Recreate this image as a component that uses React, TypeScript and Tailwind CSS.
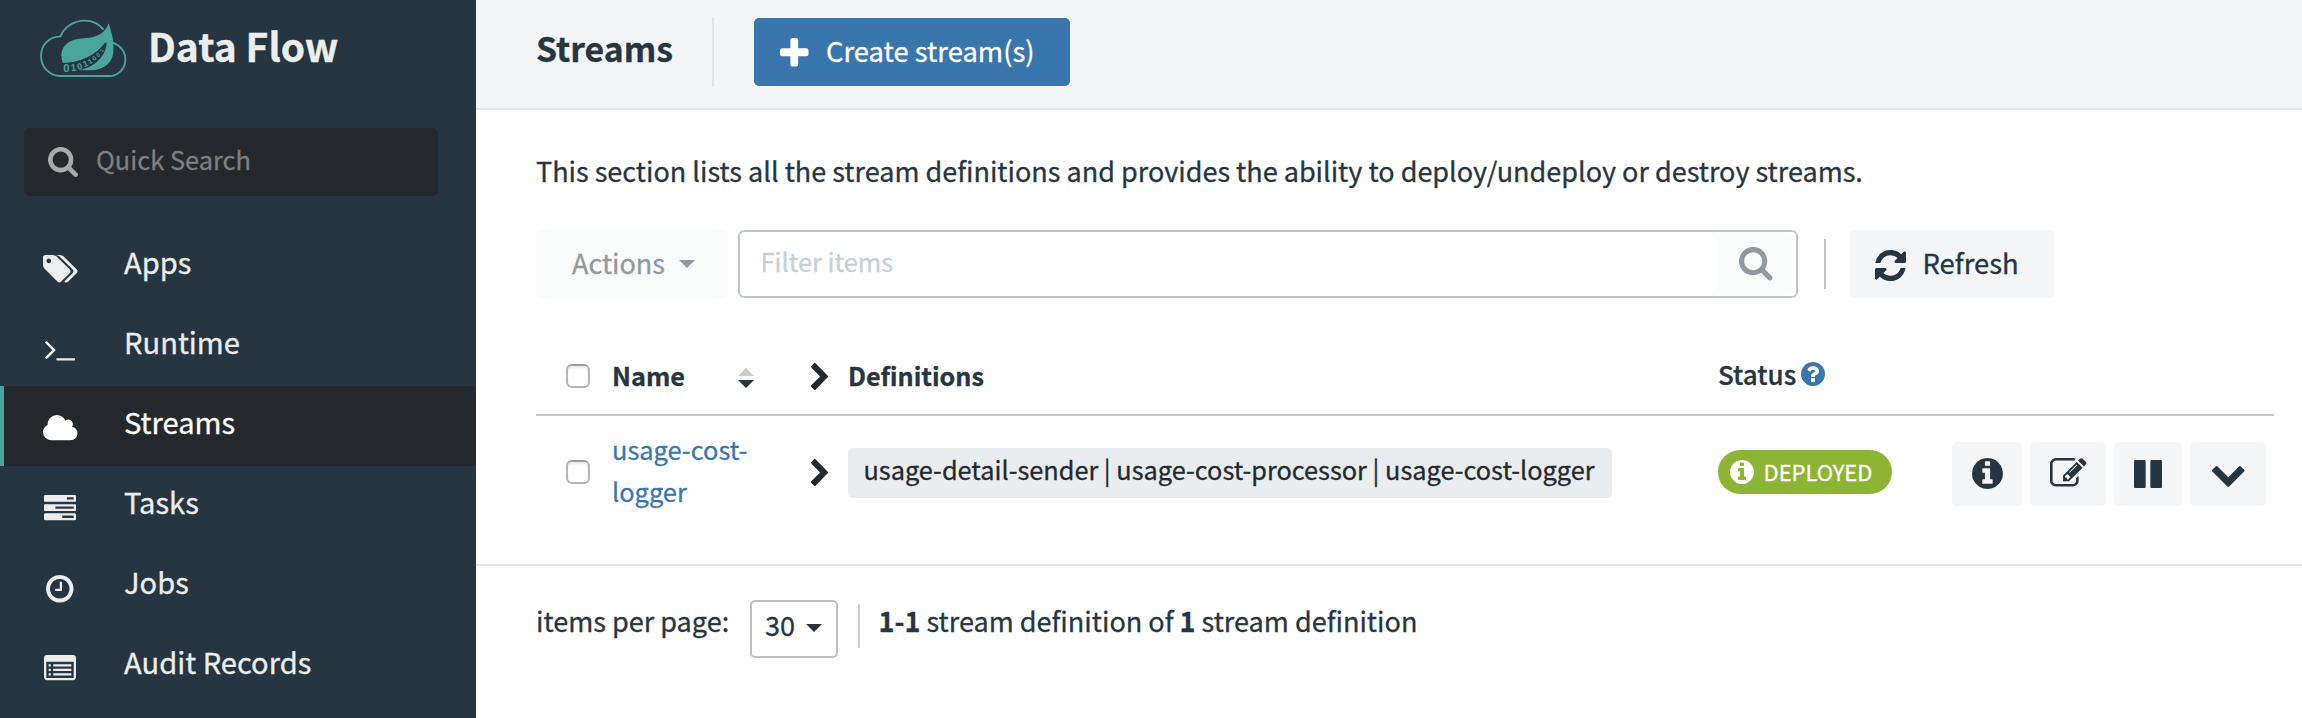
import React from "react";

type IconProps = { viewBox: string; d: string; className: string };

function Icon({ viewBox, d, className }: IconProps) {
  return (
    <svg viewBox={viewBox} fill="currentColor" preserveAspectRatio="none" className={"shrink-0 overflow-visible [-webkit-text-stroke:0] " + className} aria-hidden="true">
      <path d={d} />
    </svg>
  );
}

const DISC =
  "m640 416q0 209-103 385.5t-279.5 279.5-385.5 103-385.5-103-279.5-279.5-103-385.5 103-385.5 279.5-279.5 385.5-103 385.5 103 279.5 279.5 103 385.5z";
const SEARCH =
  "M1216 832q0-185-131.5-316.5t-316.5-131.5-316.5 131.5-131.5 316.5 131.5 316.5 316.5 131.5 316.5-131.5 131.5-316.5zm512 832q0 52-38 90t-90 38q-54 0-90-38l-343-342q-179 124-399 124-143 0-273.5-55.5t-225-150-150-225-55.5-273.5 55.5-273.5 150-225 225-150 273.5-55.5 273.5 55.5 225 150 150 225 55.5 273.5q0 220-124 399l343 343q37 37 37 90z";
const TAGS =
  "M448 448q0-53-37.5-90.5t-90.5-37.5-90.5 37.5-37.5 90.5 37.5 90.5 90.5 37.5 90.5-37.5 37.5-90.5zm1067 576q0 53-37 90l-491 492q-39 37-91 37-53 0-90-37l-715-716q-38-37-64.5-101t-26.5-117v-416q0-52 38-90t90-38h416q53 0 117 26.5t102 64.5l715 714q37 39 37 91zm384 0q0 53-37 90l-491 492q-39 37-91 37-36 0-59-14t-53-45l470-470q37-37 37-90 0-52-37-91l-715-714q-38-38-102-64.5t-117-26.5h224q53 0 117 26.5t102 64.5l715 714q37 39 37 91z";
const TERMINAL =
  "M649 983l-466 466q-10 10-23 10t-23-10l-50-50q-10-10-10-23t10-23l393-393-393-393q-10-10-10-23t10-23l50-50q10-10 23-10t23 10l466 466q10 10 10 23t-10 23zm1079 457v64q0 14-9 23t-23 9h-960q-14 0-23-9t-9-23v-64q0-14 9-23t23-9h960q14 0 23 9t9 23z";
const CLOUD =
  "M1984 1152q0 159-112.5 271.5t-271.5 112.5h-1088q-185 0-316.5-131.5t-131.5-316.5q0-132 71-241.5t187-163.5q-2-28-2-43 0-212 150-362t362-150q158 0 286.5 88t187.5 230q70-62 166-62 106 0 181 75t75 181q0 75-41 138 129 30 213 134.5t84 239.5z";
const TASKS =
  "M1024 1408h640v-128h-640v128zm-384-512h1024v-128h-1024v128zm640-512h384v-128h-384v128zm512 832v256q0 26-19 45t-45 19h-1664q-26 0-45-19t-19-45v-256q0-26 19-45t45-19h1664q26 0 45 19t19 45zm0-512v256q0 26-19 45t-45 19h-1664q-26 0-45-19t-19-45v-256q0-26 19-45t45-19h1664q26 0 45 19t19 45zm0-512v256q0 26-19 45t-45 19h-1664q-26 0-45-19t-19-45v-256q0-26 19-45t45-19h1664q26 0 45 19t19 45z";
const CLOCK =
  "M1024 544v448q0 14-9 23t-23 9h-320q-14 0-23-9t-9-23v-64q0-14 9-23t23-9h224v-352q0-14 9-23t23-9h64q14 0 23 9t9 23zm416 352q0-148-73-273t-198-198-273-73-273 73-198 198-73 273 73 273 198 198 273 73 273-73 198-198 73-273zm224 0q0 209-103 385.5t-279.5 279.5-385.5 103-385.5-103-279.5-279.5-103-385.5 103-385.5 279.5-279.5 385.5-103 385.5 103 279.5 279.5 103 385.5z";
const SMALL = "q0 13-9.5 22.5t-22.5 9.5h-64q-13 0-22.5-9.5t-9.5-22.5v-64q0-13 9.5-22.5t22.5-9.5h64q13 0 22.5 9.5t9.5 22.5z";
const LONG = "q0 13-9.5 22.5t-22.5 9.5h-960q-13 0-22.5-9.5t-9.5-22.5v-64q0-13 9.5-22.5t22.5-9.5h960q13 0 22.5 9.5t9.5 22.5z";
const LIST =
  `M384 1184v64${SMALL}M384 928v64${SMALL}M384 672v64${SMALL}M1536 1184v64${LONG}M1536 928v64${LONG}M1536 672v64${LONG}` +
  "M1664 1376v-832q0-13-9.5-22.5t-22.5-9.5h-1472q-13 0-22.5 9.5t-9.5 22.5v832q0 13 9.5 22.5t22.5 9.5h1472q13 0 22.5-9.5t9.5-22.5zm128-1088v1088q0 66-47 113t-113 47h-1472q-66 0-113-47t-47-113v-1088q0-66 47-113t113-47h1472q66 0 113 47t47 113z";
const PLUS =
  "M1600 736v192q0 40-28 68t-68 28h-416v416q0 40-28 68t-68 28h-192q-40 0-68-28t-28-68v-416h-416q-40 0-68-28t-28-68v-192q0-40 28-68t68-28h416v-416q0-40 28-68t68-28h192q40 0 68 28t28 68v416h416q40 0 68 28t28 68z";
const REFRESH =
  "M1639 1056q0 5-1 7-64 268-268 434.5t-478 166.5q-146 0-282.5-55t-243.5-157l-129 129q-19 19-45 19t-45-19-19-45v-448q0-26 19-45t45-19h448q26 0 45 19t19 45-19 45l-137 137q71 66 161 102t187 36q134 0 250-65t186-179q11-17 53-117 8-23 30-23h192q13 0 22.5 9.5t9.5 22.5zm25-800v448q0 26-19 45t-45 19h-448q-26 0-45-19t-19-45 19-45l138-138q-148-137-349-137-134 0-250 65t-186 179q-11 17-53 117-8 23-30 23h-199q-13 0-22.5-9.5t-9.5-22.5v-7q65-268 270-434.5t480-166.5q146 0 284 55.5t245 156.5l130-129q19-19 45-19t45 19 19 45z";
const QUESTION =
  "M1024 1376v-192q0-14-9-23t-23-9h-192q-14 0-23 9t-9 23v192q0 14 9 23t23 9h192q14 0 23-9t9-23zm256-672q0-88-55.5-163t-138.5-116-170-41q-243 0-371 213-15 24 8 42l132 100q7 6 19 6 16 0 25-12 53-68 86-92 34-24 86-24 48 0 85.5 26t37.5 59q0 38-20 61t-68 45q-63 28-115.5 86.5t-52.5 125.5v36q0 14 9 23t23 9h192q14 0 23-9t9-23q0-19 21.5-49.5t54.5-49.5q32-18 49-28.5t46-35 44.5-48 28-60.5 12.5-81zM1664 896q0 209-103 385.5t-279.5 279.5-385.5 103-385.5-103-279.5-279.5-103-385.5 103-385.5 279.5-279.5 385.5-103 385.5 103 279.5 279.5 103 385.5z";
const INFO =
  "M1152 1376v-160q0-14-9-23t-23-9h-96v-512q0-14-9-23t-23-9h-320q-14 0-23 9t-9 23v160q0 14 9 23t23 9h96v320h-96q-14 0-23 9t-9 23v160q0 14 9 23t23 9h448q14 0 23-9t9-23zm-128-896v-160q0-14-9-23t-23-9h-192q-14 0-23 9t-9 23v160q0 14 9 23t23 9h192q14 0 23-9t9-23z" +
  DISC;
const EDIT =
  "M888 1184l116-116-152-152-116 116v56h96v96h56zm440-720q-16-16-33 1l-350 350q-17 17-1 33t33-1l350-350q17-17 1-33zm80 594v190q0 119-84.5 203.5t-203.5 84.5h-832q-119 0-203.5-84.5t-84.5-203.5v-832q0-119 84.5-203.5t203.5-84.5h832q63 0 117 25 15 7 18 23 3 17-9 29l-49 49q-14 14-32 8-23-6-45-6h-832q-66 0-113 47t-47 113v832q0 66 47 113t113 47h832q66 0 113-47t47-113v-126q0-13 9-22l64-64q15-15 35-7t20 29zm-96-738l288 288-672 672h-288v-288zm444 132l-92 92-288-288 92-92q28-28 68-28t68 28l152 152q28 28 28 68t-28 68z";
const PAUSE =
  "M1664 192v1408q0 26-19 45t-45 19h-512q-26 0-45-19t-19-45v-1408q0-26 19-45t45-19h512q26 0 45 19t19 45zm-896 0v1408q0 26-19 45t-45 19h-512q-26 0-45-19t-19-45v-1408q0-26 19-45t45-19h512q26 0 45 19t19 45z";
const CHEVRON_DOWN =
  "M1683 808l-742 741q-19 19-45 19t-45-19l-742-741q-19-19-19-45.5t19-45.5l166-165q19-19 45-19t45 19l531 531 531-531q19-19 45-19t45 19l166 165q19 19 19 45.5t-19 45.5z";
const CHEVRON_RIGHT =
  "M1363 877l-742 742q-19 19-45 19t-45-19l-166-166q-19-19-19-45t19-45l531-531-531-531q-19-19-19-45t19-45l166-166q19-19 45-19t45 19l742 742q19 19 19 45t-19 45z";

function Logo() {
  const digits: [string, number, number, number, number][] = [
    ["0", 109, 187, 34, 0],
    ["1", 131, 184, 30, -6],
    ["0", 151, 179, 27, -14],
    ["1", 170, 170, 25, -24],
    ["1", 184, 161, 21, -32],
    ["0", 197, 151, 19, -38],
    ["0", 209, 140, 17, -45],
    ["1", 219, 126, 15, -52],
  ];
  return (
    <svg viewBox="30 28 260 176" className="h-[58.7px] w-[86.7px] shrink-0 overflow-visible [-webkit-text-stroke:0]" aria-hidden="true">
      <path
        d="M221 60C207 43 187 33 164 33C131 33 103 52 91 81C58 80 33 106 33 139C33 172 59 199 91 199H237C264 199 286 178 286 150C286 125 270 106 247 99"
        fill="none"
        stroke="#4aa59d"
        strokeWidth="5.5"
      />
      <path
        d="M236 41C226 68 206 84 162 86C118 88 94 108 94 136C94 146 96 154 99 160C150 158 196 138 225 99L230 99C228 136 200 170 146 182H185C225 180 249 157 250 124C252 92 245 70 236 41Z"
        fill="#4aa59d"
      />
      {digits.map(([t, x, y, s, r], i) => (
        <text
          key={i}
          x={x}
          y={y}
          fontSize={s}
          textAnchor="middle"
          fill="#4aa59d"
          transform={`rotate(${r} ${x} ${y})`}
          className="font-['Liberation_Sans',sans-serif] font-bold"
        >
          {t}
        </text>
      ))}
    </svg>
  );
}

const NAV = [
  { label: "Apps", viewBox: "0 128 1899 1515", d: TAGS, icon: "h-[27.5px] w-[34.5px] mt-[5px]" },
  { label: "Runtime", viewBox: "77 461 1651 1075", d: TERMINAL, icon: "h-[19.5px] w-[30px] mt-[9px]" },
  { label: "Streams", viewBox: "64 128 1920 1408", d: CLOUD, icon: "h-[25.2px] w-[34.5px] mt-[3px]", active: true },
  { label: "Tasks", viewBox: "0 128 1792 1408", d: TASKS, icon: "h-[25.2px] w-[32px] mt-[3px]" },
  { label: "Jobs", viewBox: "128 128 1536 1536", d: CLOCK, icon: "h-[27.5px] w-[27.5px] mt-[5px]" },
  { label: "Audit Records", viewBox: "0 128 1792 1408", d: LIST, icon: "h-[25.2px] w-[32px] mt-[3px]" },
];

function Sidebar() {
  return (
    <aside className="flex h-full w-[476px] shrink-0 flex-col bg-[#273540] text-[#eceeee]">
      <div className="flex h-[97px] items-center pl-[40px]">
        <Logo />
        <span className="mb-[7px] ml-[21.3px] text-[39px] leading-[48px] font-bold">Data Flow</span>
      </div>
      <div className="mt-[31px] ml-[24px] flex h-[68px] w-[414px] items-center rounded-[6px] bg-[#25292d] pl-[24px]">
        <Icon viewBox="64 128 1664 1664" d={SEARCH} className="h-[30px] w-[30px] text-[#a9abac]" />
        <span className="mb-[6px] ml-[18px] text-[25.4px] leading-[36px] text-[#7d8082]">Quick Search</span>
      </div>
      <nav className="mt-[30px] flex flex-col">
        {NAV.map((n) => (
          <a
            key={n.label}
            className={
              "flex h-[80px] items-center border-l-4 " +
              (n.active ? "border-[#4aa59d] bg-[#25292d] text-white" : "border-transparent")
            }
          >
            <span className="flex w-[112px] justify-center">
              <Icon viewBox={n.viewBox} d={n.d} className={n.icon} />
            </span>
            <span className="mb-[10px] ml-[8px] text-[29.1px] leading-[40px]">{n.label}</span>
          </a>
        ))}
      </nav>
    </aside>
  );
}

function Checkbox() {
  return (
    <span className="h-[24px] w-[24px] rounded-[6px] border-2 border-[#b4b4b4] border-t-[#9c9c9c] bg-white shadow-[inset_0_2px_2px_#ececec]" />
  );
}

const ROW = "grid grid-cols-[75px_200px_37px_870px_234px_322px] items-center";

function StreamsTable() {
  return (
    <div className="mt-[38px] mr-[28px]">
      <div className={ROW + " h-[80px] border-b-2 border-[#c3c9cd]"}>
        <span className="mt-[2px] flex pl-[30px]">
          <Checkbox />
        </span>
        <span className="flex items-center pl-[1px] text-[25.3px] leading-[36px] font-bold">
          <span className="w-[126px]">Name</span>
          <svg viewBox="0 0 16 20" className="mt-[6px] h-[20px] w-[16px]" aria-hidden="true">
            <path d="M8 0L16 8H0Z" fill="#cccccc" />
            <path d="M0 12H16L8 20Z" fill="#273540" />
          </svg>
        </span>
        <Icon viewBox="346 154 1036 1484" d={CHEVRON_RIGHT} className="mt-[4px] h-[25px] w-[17px] text-[#25292d]" />
        <span className="text-[25.2px] leading-[36px] font-bold">Definitions</span>
        <span className="mb-[2px] flex items-center text-[26px] leading-[36px] font-medium">
          Status
          <Icon viewBox="128 128 1536 1536" d={QUESTION} className="ml-[5px] h-[24px] w-[24px] text-[#3a76ae]" />
        </span>
      </div>

      <div className={ROW + " h-[114px]"}>
        <span className="mb-[2px] flex pl-[30px]">
          <Checkbox />
        </span>
        <a className="mb-[6px] w-[150px] pl-[1px] text-[25.4px] leading-[42px] text-[#3a76ae]">
          usage-cost-
          <br />
          logger
        </a>
        <Icon viewBox="346 154 1036 1484" d={CHEVRON_RIGHT} className="h-[25px] w-[17px] text-[#25292d]" />
        <span className="flex h-[50px] w-[764px] items-start rounded-[5px] bg-[#e8ecef] pl-[15.5px] text-[25.3px] leading-[42px] whitespace-nowrap text-[#25292d]">
          usage-detail-sender | usage-cost-processor | usage-cost-logger
        </span>
        <span className="mb-[2px] flex h-[44px] w-[174px] items-center rounded-full bg-[#8db434] pl-[12px] text-[22px] leading-[32px] text-white">
          <Icon viewBox="128 128 1536 1536" d={INFO} className="h-[24px] w-[24px]" />
          <span className="mb-[3px] ml-[9.5px]">DEPLOYED</span>
        </span>
        <div className="mt-[2px] flex gap-[8px] text-[#273540]">
          <button className="flex h-[64px] w-[70px] items-center justify-center rounded-[5px] bg-[#f4f5f7]">
            <Icon viewBox="128 128 1536 1536" d={INFO} className="mb-[2px] h-[31px] w-[31px]" />
          </button>
          <button className="flex h-[64px] w-[76px] items-center justify-center rounded-[5px] bg-[#f4f5f7]">
            <Icon viewBox="0 128 1792 1408" d={EDIT} className="mb-[4px] h-[28.5px] w-[36.5px]" />
          </button>
          <button className="flex h-[64px] w-[68px] items-center justify-center rounded-[5px] bg-[#f4f5f7]">
            <Icon viewBox="128 128 1536 1536" d={PAUSE} className="h-[28px] w-[28px]" />
          </button>
          <button className="flex h-[64px] w-[76px] items-center justify-center rounded-[5px] bg-[#f4f5f7]">
            <Icon viewBox="90 533 1612 1035" d={CHEVRON_DOWN} className="mt-[4px] h-[21px] w-[32.5px]" />
          </button>
        </div>
      </div>
    </div>
  );
}

function Caret({ className }: { className: string }) {
  return (
    <svg viewBox="0 0 16 8" className={"h-[8px] w-[16px] shrink-0 " + className} fill="currentColor" aria-hidden="true">
      <path d="M0 0H16L8 8Z" />
    </svg>
  );
}

export default function App() {
  return (
    <div className="flex h-[718px] w-full overflow-hidden bg-white font-['Noto_Sans_CJK_SC',sans-serif] text-[#273540] [-webkit-text-stroke:0.3px]">
      <Sidebar />
      <main className="flex min-w-0 flex-1 flex-col">
        <header className="flex h-[110px] items-start border-b-2 border-[#e0e8e7] bg-[#f4f5f7] pt-[18px] pl-[60px]">
          <h1 className="w-[176px] text-[33.8px] leading-[59px] font-bold">Streams</h1>
          <span className="h-[68px] w-[2px] bg-[#dfe7e6]" />
          <button className="ml-[40px] flex h-[68px] w-[316px] items-center rounded-[5px] bg-[#3a76ae] pl-[26px] text-white">
            <Icon viewBox="192 128 1408 1408" d={PLUS} className="h-[28.5px] w-[28.5px]" />
            <span className="mb-[4px] ml-[17.5px] text-[27.4px] leading-[40px]">Create stream(s)</span>
          </button>
        </header>

        <section className="flex h-[454px] flex-col pt-[41px] pl-[60px]">
          <p className="text-[27.03px] leading-[40px] whitespace-nowrap">
            This section lists all the stream definitions and provides the ability to deploy/undeploy or destroy streams.
          </p>
          <div className="mt-[39px] flex h-[68px] items-center">
            <button className="flex h-[68px] w-[192px] items-center rounded-[5px] bg-[#fafbfb] pl-[36px] text-[#92999e]">
              <span className="mb-[2px] text-[27px] leading-[40px]">Actions</span>
              <Caret className="ml-[14px]" />
            </button>
            <div className="ml-[10px] flex h-[68px] w-[1060px] items-center justify-between rounded-[6px] border-2 border-[#bfc6ca] pr-[4px] pl-[20.5px]">
              <span className="mb-[6px] text-[25.4px] leading-[36px] text-[#c8cfd3]">Filter items</span>
              <span className="flex h-[56px] w-[74px] items-center rounded-[4px] bg-[#fafbfb] pl-[20.5px]">
                <Icon viewBox="64 128 1664 1664" d={SEARCH} className="h-[33.5px] w-[33.5px] text-[#93999e]" />
              </span>
            </div>
            <span className="ml-[26px] h-[50px] w-[2px] bg-[#bfc6ca]" />
            <button className="ml-[24px] flex h-[68px] w-[204px] items-center rounded-[5px] bg-[#f4f5f7] pl-[25px]">
              <Icon viewBox="128 128 1536 1536" d={REFRESH} className="mt-[2px] h-[31px] w-[31px]" />
              <span className="mb-[4px] ml-[16.5px] text-[27.4px] leading-[40px]">Refresh</span>
            </button>
          </div>
          <StreamsTable />
        </section>

        <footer className="flex flex-1 items-start border-t-2 border-[#e2e7ea] pt-[34px] pl-[60px] text-[27.05px] leading-[40px]">
          <span className="mt-[1px] w-[214px]">items per page:</span>
          <button className="flex h-[58px] w-[88px] items-center rounded-[5px] border-2 border-[#bfbfbf] pl-[13px]">
            <span className="mb-[9px]">30</span>
            <Caret className="mb-[2px] ml-[11px]" />
          </button>
          <span className="mt-[4px] ml-[20px] h-[44px] w-[2px] bg-[#cccccc]" />
          <span className="mt-[1px] ml-[18.5px]">
            <b>1-1</b> stream definition of <b>1</b> stream definition
          </span>
        </footer>
      </main>
    </div>
  );
}
